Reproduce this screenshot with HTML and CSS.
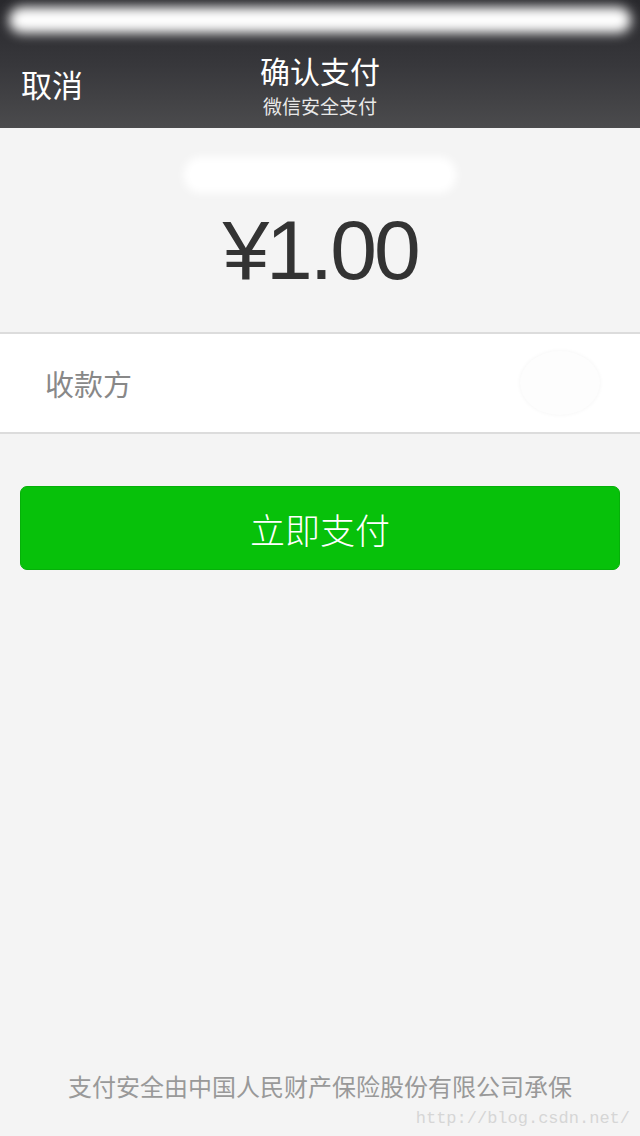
FILE: index.html
```html
<!DOCTYPE html>
<html lang="zh">
<head>
<meta charset="utf-8">
<title>确认支付</title>
<link rel="stylesheet" href="styles.css">
</head>
<body>
<div class="page">
  <header class="header">
    <div class="status"><div class="status-blur"></div></div>
    <div class="nav">
      <span class="cancel">取消</span>
      <div class="titles">
        <div class="title">确认支付</div>
        <div class="subtitle">微信安全支付</div>
      </div>
    </div>
  </header>
  <section class="summary">
    <div class="merchant"><div class="merchant-blur"></div></div>
    <div class="amount">¥1.00</div>
  </section>
  <section class="row">
    <span class="label">收款方</span>
    <div class="payee-blur"></div>
  </section>
  <div class="action">
    <button class="pay">立即支付</button>
  </div>
  <div class="spacer"></div>
  <footer class="footer">
    <div class="note">支付安全由中国人民财产保险股份有限公司承保</div>
    <div class="watermark">http://blog.csdn.net/</div>
  </footer>
</div>
</body>
</html>
```
FILE: styles.css
```css
html, body {
  margin: 0;
  padding: 0;
  background: #f4f4f4;
}
body {
  font-family: "Noto Sans CJK SC", "Liberation Sans", sans-serif;
}
.page {
  width: 640px;
  height: 1136px;
  display: flex;
  flex-direction: column;
  overflow: hidden;
}
.header {
  height: 128px;
  background: linear-gradient(#28282c 0%, #37373b 50%, #4b4b4d 100%);
  display: flex;
  flex-direction: column;
}
.status {
  height: 40px;
  display: flex;
  align-items: center;
  justify-content: center;
}
.status-blur {
  width: 622px;
  height: 26px;
  background: #ffffff;
  border-radius: 16px;
  filter: blur(6px);
}
.nav {
  height: 88px;
  position: relative;
  display: flex;
  align-items: center;
  justify-content: center;
}
.cancel {
  position: absolute;
  left: 21px;
  top: 24px;
  color: #ffffff;
  font-size: 31px;
  line-height: 40px;
}
.titles {
  display: flex;
  flex-direction: column;
  align-items: center;
}
.title {
  color: #ffffff;
  font-size: 30px;
  line-height: 44px;
  font-weight: 400;
}
.subtitle {
  color: #e8e8e8;
  font-size: 19px;
  line-height: 28px;
}
.summary {
  height: 204px;
  display: flex;
  flex-direction: column;
  align-items: center;
  border-bottom: 2px solid #dcdcdc;
}
.merchant {
  margin-top: 26px;
  height: 42px;
  display: flex;
  align-items: center;
}
.merchant-blur {
  width: 272px;
  height: 36px;
  background: #ffffff;
  border-radius: 16px;
  filter: blur(4px);
}
.amount {
  margin-top: 4px;
  font-family: "Liberation Sans", sans-serif;
  font-size: 84px;
  line-height: 100px;
  color: #333333;
  letter-spacing: -3px;
}
.row {
  height: 98px;
  background: #ffffff;
  border-bottom: 2px solid #dcdcdc;
  display: flex;
  align-items: center;
  justify-content: space-between;
  padding: 0 40px 0 45px;
}
.label {
  font-size: 29px;
  color: #888888;
}
.payee-blur {
  width: 80px;
  height: 64px;
  border-radius: 50%;
  background: #fdfdfd;
  box-shadow: 0 0 4px #f4f4f4;
}
.action {
  padding: 52px 20px 0;
}
.pay {
  width: 100%;
  height: 84px;
  border: 1px solid #06b009;
  border-radius: 7px;
  background: #07c10a;
  color: #ffffff;
  font-family: "Noto Sans CJK SC", sans-serif;
  font-size: 35px;
  font-weight: 300;
  cursor: pointer;
}
.spacer {
  flex: 1;
}
.footer {
  height: 72px;
  position: relative;
  display: flex;
  justify-content: center;
}
.note {
  font-size: 24px;
  color: #999999;
  line-height: 32px;
  margin-top: 6px;
}
.watermark {
  position: absolute;
  right: 10px;
  bottom: 8px;
  font-family: "Liberation Mono", monospace;
  font-size: 17px;
  color: #d6d6d6;
}
```
